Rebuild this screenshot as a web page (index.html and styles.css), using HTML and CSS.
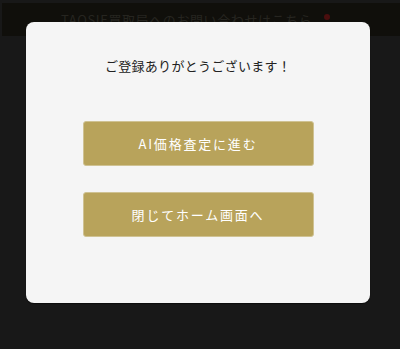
FILE: index.html
```html
<!DOCTYPE html>
<html lang="ja">
<head>
<meta charset="utf-8">
<link rel="stylesheet" href="styles.css">
</head>
<body>
<div class="page">
  <div class="topbar">
    <span class="topbar-text">TAOSIE買取局へのお問い合わせはこちら</span>
    <span class="topbar-dot"></span>
  </div>
</div>
<div class="overlay">
  <div class="modal">
    <p class="modal-title">ご登録ありがとうございます！</p>
    <div class="actions">
      <button class="btn">AI価格査定に進む</button>
      <button class="btn">閉じてホーム画面へ</button>
    </div>
  </div>
</div>
</body>
</html>
```
FILE: styles.css
```css
html, body {
  margin: 0;
  padding: 0;
  width: 400px;
  height: 349px;
  background: #181818;
  overflow: hidden;
  font-family: "Noto Sans CJK JP", "Noto Sans", sans-serif;
}
.page {
  padding-top: 3px;
}
.topbar {
  height: 33px;
  margin-left: 2px;
  background: #100f0b;
  display: flex;
  align-items: center;
  padding-left: 59px;
  gap: 12px;
}
.topbar-text {
  color: #262520;
  font-size: 13px;
  letter-spacing: 0.6px;
}
.topbar-dot {
  width: 6px;
  height: 6px;
  border-radius: 50%;
  background: #4a0e0e;
  margin-top: -6px;
}
.overlay {
  position: absolute;
  inset: 0;
  display: flex;
  justify-content: flex-start;
  padding-top: 22px;
  padding-left: 26px;
}
.modal {
  width: 344px;
  height: 281px;
  box-sizing: border-box;
  background: #f5f5f5;
  border-radius: 8px;
  box-shadow: 0 1px 1px rgba(0,0,0,0.5);
  display: flex;
  flex-direction: column;
  align-items: center;
  padding-top: 35px;
}
.modal-title {
  margin: 0;
  font-size: 13px;
  line-height: 18px;
  color: #222;
  letter-spacing: 0.3px;
}
.actions {
  margin-top: 46px;
  display: flex;
  flex-direction: column;
  gap: 26px;
}
.btn {
  width: 231px;
  height: 45px;
  border: 1px solid #cfc293;
  border-radius: 3px;
  background: #b8a35b;
  color: #fff;
  font-family: "Noto Sans CJK JP", "Noto Sans", sans-serif;
  font-size: 13px;
  letter-spacing: 1.8px;
  padding: 0;
  cursor: pointer;
}
```
